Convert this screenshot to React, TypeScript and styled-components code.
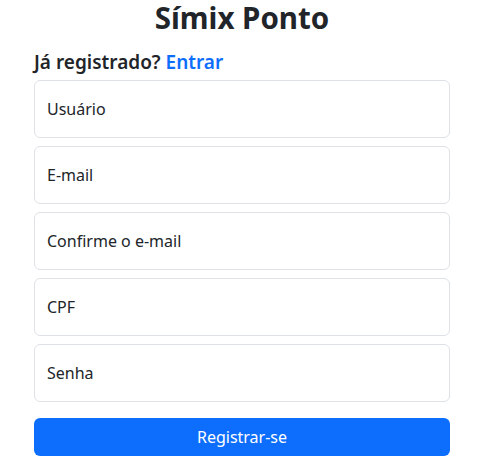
import React from "react";
import styled, { createGlobalStyle } from "styled-components";

const Global = createGlobalStyle`
  * { box-sizing: border-box; }
  body {
    margin: 0;
    background: #fff;
    color: #212529;
    font-family: "Segoe UI", "Noto Sans", sans-serif;
    font-size: 16px;
    line-height: 1.5;
  }
`;

const Page = styled.main`
  width: 416px;
  margin-left: 34px;
  display: flex;
  flex-direction: column;
`;

const Title = styled.h1`
  margin: 0 0 16px;
  text-align: center;
  font-size: 29.5px;
  font-weight: 700;
  line-height: 1.2;
`;

const Subtitle = styled.h5`
  margin: 0 0 6px;
  font-size: 19px;
  font-weight: 600;
  line-height: 1.2;
`;

const Link = styled.a`
  color: #0d6efd;
  text-decoration: none;
`;

const Form = styled.form`
  display: flex;
  flex-direction: column;
  gap: 8px;
`;

const Field = styled.div`
  height: 58px;
  border: 1px solid #dee2e6;
  border-radius: 6px;
  padding: 16px 12px;
  font-size: 16px;
  line-height: 1.5;
  color: #212529;
`;

const Button = styled.button`
  margin-top: 8px;
  height: 38px;
  border: 0;
  border-radius: 6px;
  background: #0d6efd;
  color: #fff;
  font-family: inherit;
  font-size: 16px;
  cursor: pointer;
`;

const fields = ["Usuário", "E-mail", "Confirme o e-mail", "CPF", "Senha"];

export default function App() {
  return (
    <>
      <Global />
      <Page>
        <Title>Símix Ponto</Title>
        <Subtitle>
          Já registrado? <Link href="#">Entrar</Link>
        </Subtitle>
        <Form onSubmit={(e) => e.preventDefault()}>
          {fields.map((f) => (
            <Field key={f}>{f}</Field>
          ))}
          <Button type="submit">Registrar-se</Button>
        </Form>
      </Page>
    </>
  );
}
